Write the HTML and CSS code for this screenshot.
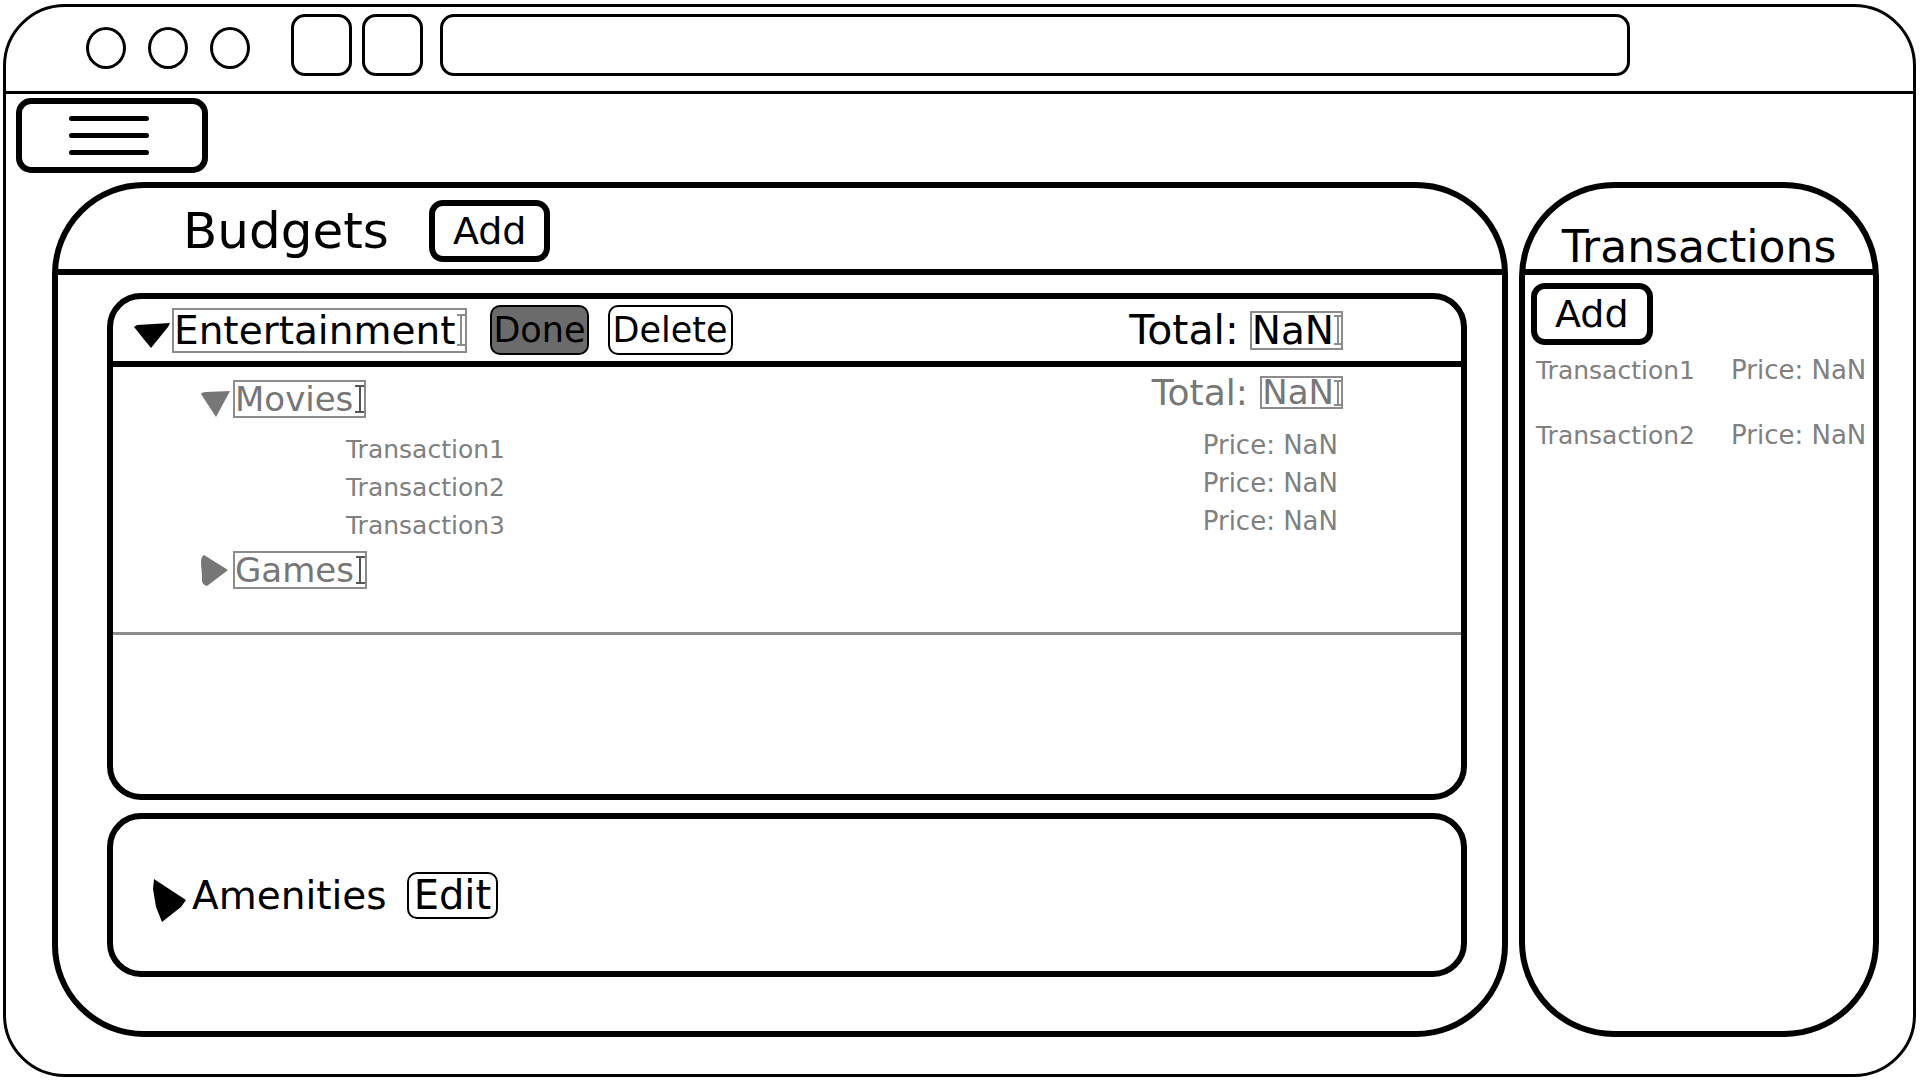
FILE: index.html
```html
<!DOCTYPE html>
<html>
<head>
<meta charset="utf-8">
<title>Budgets</title>
<link rel="stylesheet" href="styles.css">
</head>
<body>
<div class="window">
  <div class="topbar">
    <span class="dot"></span><span class="dot"></span><span class="dot"></span>
    <span class="sq sq-first"></span><span class="sq"></span>
    <span class="address"></span>
  </div>
  <div class="menu-row">
    <button class="hamburger"><span></span><span></span><span></span></button>
  </div>
  <div class="main">
    <section class="budgets">
      <header class="budgets-head">
        <h1 class="title">Budgets</h1>
        <button class="btn-add">Add</button>
      </header>
      <div class="budgets-body">
        <div class="card card-open">
          <div class="card-head">
            <svg class="tri tri-main" width="37" height="26" viewBox="0 0 37 26"><polygon points="0,5 3,3 36,1 34,5 17,26" fill="#000"/></svg>
            <span class="field field-name">Entertainment<span class="caret"></span></span>
            <button class="btn btn-done">Done</button>
            <button class="btn btn-delete">Delete</button>
            <span class="total">Total: <span class="field field-total">NaN<span class="caret caret-sm"></span></span></span>
          </div>
          <div class="card-body">
            <div class="sublist">
              <div class="sub-head">
                <svg class="tri tri-movies" width="30" height="27" viewBox="0 0 30 27"><path d="M0,4 Q1,2 5,2 L29,1 L15,27 Z" fill="#777"/></svg>
                <span class="field field-sub">Movies<span class="caret caret-dark"></span></span>
                <span class="sub-total">Total: <span class="field field-subtotal">NaN<span class="caret caret-xs"></span></span></span>
              </div>
              <div class="trans-list">
                <div class="trans-row"><span class="t-name">Transaction1</span><span class="t-price">Price: NaN</span></div>
                <div class="trans-row"><span class="t-name">Transaction2</span><span class="t-price">Price: NaN</span></div>
                <div class="trans-row"><span class="t-name">Transaction3</span><span class="t-price">Price: NaN</span></div>
              </div>
              <div class="sub-head sub-games">
                <svg class="tri tri-games" width="28" height="31" viewBox="0 0 28 31"><path d="M3,0 L27,15 L6,31 Q0,30 1,22 L0,8 Q0,1 3,0 Z" fill="#777"/></svg>
                <span class="field field-sub field-games">Games<span class="caret caret-dark"></span></span>
              </div>
            </div>
            <div class="card-space"></div>
          </div>
        </div>
        <div class="card card-closed">
          <svg class="tri tri-amen" width="34" height="43" viewBox="0 0 34 43"><polygon points="1,0 4,2 33,21 28,28 9,43 3,28 0,10" fill="#000"/></svg>
          <span class="sect-name">Amenities</span>
          <button class="btn btn-edit">Edit</button>
        </div>
      </div>
    </section>
    <aside class="transactions">
      <header class="tx-head">
        <h2 class="tx-title">Transactions</h2>
      </header>
      <div class="tx-body">
        <button class="btn-add tx-add">Add</button>
        <div class="tx-row tx-row-first"><span class="t-name">Transaction1</span><span class="t-price">Price: NaN</span></div>
        <div class="tx-row"><span class="t-name">Transaction2</span><span class="t-price">Price: NaN</span></div>
      </div>
    </aside>
  </div>
</div>
</body>
</html>
```

FILE: styles.css
```css
* { box-sizing: border-box; }
html, body { margin: 0; background: #fff; }
body { font-family: "DejaVu Sans", "Noto Sans", sans-serif; color: #000; }
button { font: inherit; color: #000; margin: 0; }

.window {
  margin: 4px 0 0 3px;
  width: 1913px;
  height: 1073px;
  border: 3px solid #000;
  border-radius: 62px;
  display: flex;
  flex-direction: column;
  overflow: hidden;
}

/* top browser bar */
.topbar {
  height: 87px;
  flex-shrink: 0;
  border-bottom: 3px solid #000;
  display: flex;
  align-items: flex-start;
  padding-left: 80px;
}
.dot {
  width: 40px;
  height: 42px;
  border: 3px solid #000;
  border-radius: 50%;
  margin-top: 20px;
  margin-right: 22px;
}
.sq {
  width: 61px;
  height: 62px;
  border: 3px solid #000;
  border-radius: 14px;
  margin-top: 7px;
  margin-right: 10px;
}
.sq-first { margin-left: 19px; }
.address {
  width: 1190px;
  height: 62px;
  margin-top: 7px;
  margin-left: 7px;
  border: 3px solid #000;
  border-radius: 14px;
}

/* hamburger */
.menu-row { padding: 4px 0 0 10px; }
.hamburger {
  width: 192px;
  height: 75px;
  border: 6px solid #000;
  border-radius: 15px;
  background: #fff;
  padding: 0 0 0 47px;
  display: flex;
  flex-direction: column;
  justify-content: center;
  align-items: flex-start;
  gap: 12px;
}
.hamburger span {
  display: block;
  width: 80px;
  height: 5px;
  background: #000;
  border-radius: 3px;
}

/* main area */
.main {
  display: flex;
  gap: 11px;
  margin: 9px 0 0 46px;
}

.budgets {
  width: 1456px;
  height: 855px;
  border: 6px solid #000;
  border-radius: 92px;
  display: flex;
  flex-direction: column;
}
.budgets-head {
  height: 87px;
  flex-shrink: 0;
  border-bottom: 6px solid #000;
  display: flex;
  align-items: center;
  padding: 4px 0 0 125px;
}
.title {
  margin: 0;
  font-size: 50px;
  font-weight: normal;
}
.btn-add {
  font-size: 38px;
  height: 62px;
  border: 6px solid #000;
  border-radius: 14px;
  background: #fff;
  padding: 0 18px;
  margin-left: 40px;
  line-height: 1;
}
.budgets-body {
  padding: 18px 35px 0 49px;
  display: flex;
  flex-direction: column;
  gap: 13px;
}

.card {
  border: 6px solid #000;
  border-radius: 34px;
}
.card-open {
  height: 507px;
  display: flex;
  flex-direction: column;
}
.card-head {
  height: 68px;
  flex-shrink: 0;
  border-bottom: 6px solid #000;
  display: flex;
  align-items: center;
  padding: 0 118px 0 21px;
}
.tri { flex-shrink: 0; display: block; }
.tri-main { margin-top: 10px; }

.field {
  border: 2px solid #8c8c8c;
  display: flex;
  align-items: center;
  white-space: nowrap;
}
.field-name {
  height: 45px;
  font-size: 39px;
  line-height: 41px;
  margin-left: 1px;
}
.caret {
  display: inline-block;
  flex-shrink: 0;
  width: 8px;
  height: 32px;
  margin-left: 2px;
  border-top: 2px solid #8c8c8c;
  border-bottom: 2px solid #8c8c8c;
  background: linear-gradient(#8c8c8c, #8c8c8c) center / 2px 100% no-repeat;
}
.caret-sm { height: 30px; width: 7px; margin-left: 0; }
.caret-xs { height: 26px; width: 7px; margin-left: 0; }
.caret-dark {
  height: 28px;
  width: 9px;
  border-top-color: #555;
  border-bottom-color: #555;
  background: linear-gradient(#555, #555) center / 2px 100% no-repeat;
}

.btn {
  font-size: 35px;
  height: 50px;
  border: 2px solid #000;
  border-radius: 10px;
  background: #fff;
  line-height: 1;
  padding: 0 3px;
}
.btn-done {
  background: #6b6b6b;
  padding: 0 1px;
  margin-left: 23px;
}
.btn-delete { margin-left: 19px; }

.total {
  margin-left: auto;
  display: flex;
  align-items: center;
  font-size: 41px;
  white-space: pre;
}
.field-total {
  height: 39px;
  font-size: 39px;
  line-height: 35px;
  margin-left: -2px;
}

.card-body {
  flex: 1;
  display: flex;
  flex-direction: column;
}
.sublist {
  padding: 9px 118px 43px 88px;
  border-bottom: 3px solid #8c8c8c;
}
.sub-head {
  display: flex;
  align-items: flex-start;
  color: #777;
}
.tri-movies { margin-top: 14px; }
.field-sub {
  height: 38px;
  font-size: 34px;
  line-height: 34px;
  margin-left: 2px;
  margin-top: 4px;
  color: #777;
}
.sub-total {
  margin-left: auto;
  display: flex;
  align-items: center;
  font-size: 36px;
  line-height: 33px;
  white-space: pre;
}
.field-subtotal {
  height: 33px;
  font-size: 34px;
  margin-left: 1px;
}

.trans-list { margin-top: 8px; }
.trans-row {
  display: flex;
  align-items: flex-end;
  height: 38px;
  padding-left: 145px;
  color: #808080;
}
.t-name { font-size: 25px; color: #808080; }
.t-price { font-size: 26px; color: #808080; }
.trans-row .t-price {
  margin-left: auto;
  margin-right: 5px;
  margin-bottom: 4px;
}

.sub-games { margin-top: 11px; }
.tri-games { margin-top: 4px; margin-left: 0; }
.field-games { margin-top: 0; margin-left: 4px; }
.card-space { flex: 1; }

.card-closed {
  height: 164px;
  display: flex;
  align-items: center;
  padding-left: 40px;
}
.tri-amen { margin-top: 10px; }
.sect-name {
  font-size: 39px;
  margin-left: 5px;
}
.btn-edit {
  font-size: 40px;
  height: 47px;
  padding: 0 5px;
  margin-left: 20px;
}

/* transactions panel */
.transactions {
  width: 360px;
  height: 855px;
  border: 6px solid #000;
  border-radius: 95px;
  display: flex;
  flex-direction: column;
}
.tx-head {
  height: 87px;
  flex-shrink: 0;
  border-bottom: 6px solid #000;
  display: flex;
  align-items: flex-end;
  justify-content: center;
}
.tx-title {
  margin: 0;
  font-size: 44px;
  line-height: 44px;
  font-weight: normal;
}
.tx-body { padding: 8px 0 0 6px; }
.tx-add { margin-left: 0; }
.tx-row {
  display: grid;
  grid-template-columns: 195px auto;
  align-items: baseline;
  line-height: 30px;
  padding-left: 5px;
  margin-top: 34px;
}
.tx-row-first { margin-top: 10px; }
```
